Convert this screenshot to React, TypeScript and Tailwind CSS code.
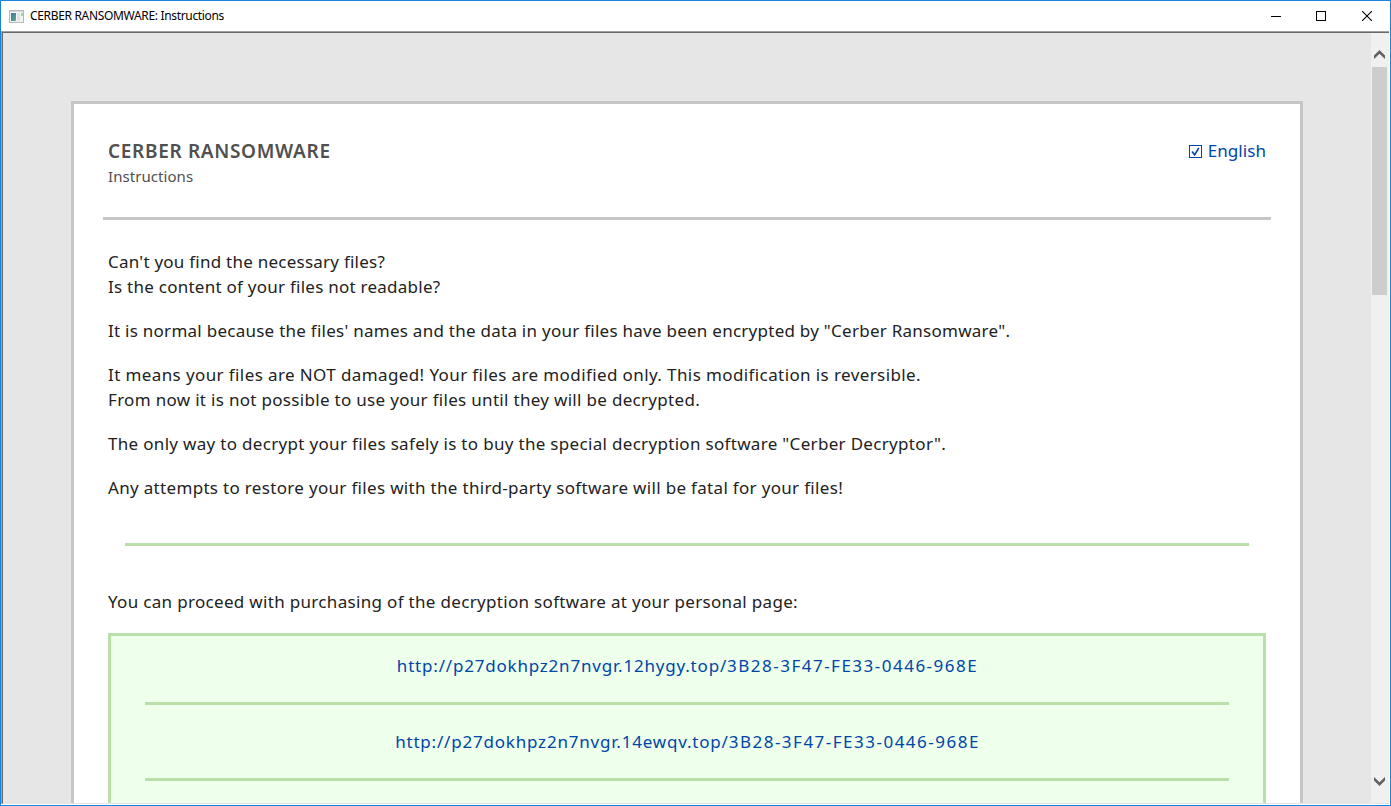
const links = [
  { host: "http://p27dokhpz2n7nvgr.12hygy.top/", id: "3B28-3F47-FE33-0446-968E" },
  { host: "http://p27dokhpz2n7nvgr.14ewqv.top/", id: "3B28-3F47-FE33-0446-968E" },
];

const paragraphs = [
  [
    { text: "Can't you find the necessary files?", tracking: "tracking-[0.24px]" },
    { text: "Is the content of your files not readable?", tracking: "tracking-[0.25px]" },
  ],
  [
    {
      text: "It is normal because the files' names and the data in your files have been encrypted by \"Cerber Ransomware\".",
      tracking: "tracking-[0.258px]",
    },
  ],
  [
    {
      text: "It means your files are NOT damaged! Your files are modified only. This modification is reversible.",
      tracking: "tracking-[0.395px]",
    },
    {
      text: "From now it is not possible to use your files until they will be decrypted.",
      tracking: "tracking-[0.31px]",
    },
  ],
  [
    {
      text: "The only way to decrypt your files safely is to buy the special decryption software \"Cerber Decryptor\".",
      tracking: "tracking-[0.315px]",
    },
  ],
  [
    {
      text: "Any attempts to restore your files with the third-party software will be fatal for your files!",
      tracking: "tracking-[0.32px]",
    },
  ],
];

function TitleBar() {
  return (
    <header className="flex h-[30px] shrink-0 items-center bg-white pl-2">
      <svg width="15" height="13" viewBox="0 0 15 13" shapeRendering="crispEdges">
        <defs>
          <linearGradient id="pane" x1="0" y1="0" x2="1" y2="1">
            <stop offset="0" stopColor="#3f72a8" />
            <stop offset="1" stopColor="#62b27c" />
          </linearGradient>
        </defs>
        <rect width="15" height="13" fill="#b4b8bb" />
        <rect x="1" y="1" width="13" height="1" fill="#d5d8dc" />
        <rect x="1" y="2" width="13" height="10" fill="#f2f4f4" />
        <rect x="2" y="3" width="5" height="8" fill="url(#pane)" />
        <rect x="8" y="3" width="3" height="8" fill="#dfe5e5" />
        <rect x="12" y="3" width="2" height="3" fill="#a9cdb5" />
      </svg>
      <h1 className="ml-1.5 text-[12px] leading-4 tracking-[-0.33px] text-black">CERBER RANSOMWARE: Instructions</h1>
      <div className="ml-auto flex">
        <div className="flex h-[29px] w-[46px] items-center justify-center">
          <svg width="10" height="10" shapeRendering="crispEdges">
            <rect y="5" width="10" height="1" fill="#000" />
          </svg>
        </div>
        <div className="flex h-[29px] w-[45px] items-start justify-center pt-[9px] pr-px">
          <svg width="10" height="10" shapeRendering="crispEdges">
            <rect x="0.5" y="0.5" width="9" height="9" fill="none" stroke="#000" />
          </svg>
        </div>
        <div className="flex h-[29px] w-[46px] items-start justify-center pt-[9px]">
          <svg width="10" height="10">
            <path d="M0 0L10 10M10 0L0 10" stroke="#000" strokeWidth="1.1" />
          </svg>
        </div>
      </div>
    </header>
  );
}

function ScrollBar() {
  return (
    <div className="flex w-[18px] shrink-0 flex-col items-center bg-[#f0f0f0] pr-[2px] pl-px">
      <svg className="mt-[17px] shrink-0" width="11" height="9" viewBox="0 0 11 9">
        <path d="M0 5.5L5.5 0L11 5.5V9L5.5 3.7L0 9Z" fill="#606060" />
      </svg>
      <div className="mt-2 h-[228px] w-full bg-[#cdcdcd]" />
      <svg className="mt-auto mb-[17px] shrink-0" width="11" height="9" viewBox="0 0 11 9">
        <path d="M0 3.5L5.5 9L11 3.5V0L5.5 5.3L0 0Z" fill="#606060" />
      </svg>
    </div>
  );
}

export default function App() {
  return (
    <div className="flex h-[806px] w-[1391px] flex-col overflow-hidden border border-[#1883d7] bg-white font-['Noto_Sans','Open_Sans',sans-serif]">
      <TitleBar />
      <div className="mr-px mb-px flex min-h-0 flex-1 border-t border-l border-[#a0a0a0]">
        <div className="flex min-w-0 flex-1 border-t border-b border-l border-t-[#696969] border-b-[#e3e3e3] border-l-[#696969]">
          <main className="min-w-0 flex-1 overflow-hidden bg-[#e6e6e6] pt-[68px] pl-[68px]">
            <article className="h-[900px] w-[1232px] border-[3px] border-[#c6c6c6] bg-white px-[34px] pt-[34px] text-[17px] leading-[25px] text-[#222]">
              <div className="flex h-[79px] justify-between">
                <div className="text-[#505050]">
                  <h2 className="text-[19px] leading-[26px] font-semibold tracking-[0.67px]">CERBER RANSOMWARE</h2>
                  <p className="text-[15px] leading-[25px] tracking-[0.06px]">Instructions</p>
                </div>
                <div className="flex h-[25px] items-center text-[#0045a8]">
                  <svg className="mt-px mr-[6px]" width="13" height="13" viewBox="0 0 13 13">
                    <rect x="0.5" y="0.5" width="12" height="12" fill="none" stroke="currentColor" />
                    <path d="M3 6.5L5.6 9.8L9.8 3" fill="none" stroke="currentColor" strokeWidth="1.6" />
                  </svg>
                  <span className="tracking-[0.06px]">English</span>
                </div>
              </div>
              <div className="-mx-[5px] h-[3px] bg-[#c6c6c6]" />
              <section className="mt-[29px] flex flex-col gap-[19px]">
                {paragraphs.map((lines) => (
                  <p key={lines[0].text}>
                    {lines.map((line) => (
                      <span key={line.text} className={`block whitespace-nowrap ${line.tracking}`}>
                        {line.text}
                      </span>
                    ))}
                  </p>
                ))}
              </section>
              <div className="mx-[17px] mt-[43px] h-[3px] bg-[#bbdfa9]" />
              <p className="mt-[43px] tracking-[0.32px]">
                You can proceed with purchasing of the decryption software at your personal page:
              </p>
              <section className="mt-[19px] h-[260px] border-[3px] border-[#bbdfa9] bg-[#eeffec] px-[34px] pt-[17px]">
                {links.map((link) => (
                  <div key={link.host} className="mb-6 text-center text-[#0045a8]">
                    <p className="mb-6 pl-px">
                      <span className="tracking-[0.8px]">{link.host}</span>
                      <span className="tracking-[1.49px]">{link.id}</span>
                    </p>
                    <div className="h-[3px] bg-[#bbdfa9]" />
                  </div>
                ))}
              </section>
            </article>
          </main>
          <ScrollBar />
        </div>
      </div>
    </div>
  );
}
